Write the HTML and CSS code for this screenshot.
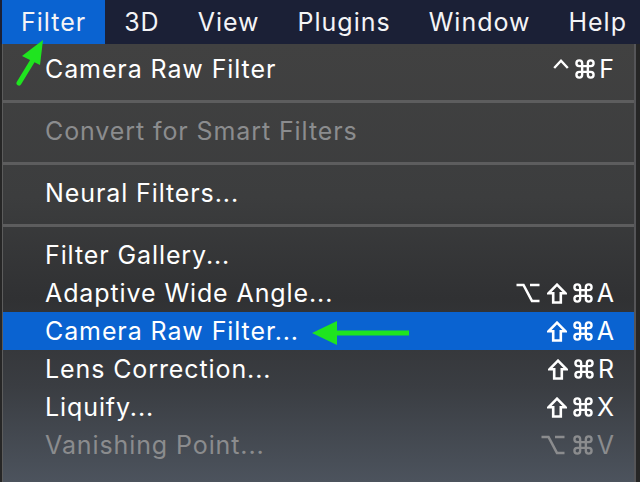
FILE: index.html
```html
<!DOCTYPE html>
<html>
<head>
<meta charset="utf-8">
<link rel="stylesheet" href="styles.css">
</head>
<body>
<svg class="defs" width="0" height="0">
  <defs>
    <symbol id="k-shift" viewBox="0 0 20 21">
      <path d="M10 1.7 L18.3 10.2 H13.8 V19.5 H6.2 V10.2 H1.7 Z" fill="none" stroke="currentColor" stroke-width="2.6" stroke-linejoin="miter"/>
    </symbol>
    <symbol id="k-cmd" viewBox="-1.5 -1.5 23 21">
      <path d="M7 6 H13 V12 H7 Z M7 6 V3 A3 3 0 1 0 4 6 Z M13 6 V3 A3 3 0 1 1 16 6 Z M7 12 V15 A3 3 0 1 1 4 12 Z M13 12 V15 A3 3 0 1 0 16 12 Z" fill="none" stroke="currentColor" stroke-width="2.5"/>
    </symbol>
    <symbol id="k-opt" viewBox="0 0 24 20">
      <path d="M0.5 2 H7.5 L16 18 H23.5 M14 2 H23.5" fill="none" stroke="currentColor" stroke-width="2.6"/>
    </symbol>
    <symbol id="k-ctrl" viewBox="0 0 16 10">
      <path d="M1.2 9 L8 1.8 L14.8 9" fill="none" stroke="currentColor" stroke-width="2.4"/>
    </symbol>
  </defs>
</svg>
<div class="screen">
  <div class="menubar">
    <span class="mb-item active">Filter</span>
    <span class="mb-item">3D</span>
    <span class="mb-item">View</span>
    <span class="mb-item">Plugins</span>
    <span class="mb-item">Window</span>
    <span class="mb-item">Help</span>
  </div>
  <div class="menu">
    <div class="row"><span class="label">Camera Raw Filter</span><span class="keys"><svg class="k ctrl"><use href="#k-ctrl"/></svg><svg class="k cmd"><use href="#k-cmd"/></svg><span class="kl">F</span></span></div>
    <div class="sep"></div>
    <div class="row disabled"><span class="label">Convert for Smart Filters</span></div>
    <div class="sep"></div>
    <div class="row"><span class="label">Neural Filters...</span></div>
    <div class="sep"></div>
    <div class="row"><span class="label">Filter Gallery...</span></div>
    <div class="row"><span class="label">Adaptive Wide Angle...</span><span class="keys"><svg class="k opt"><use href="#k-opt"/></svg><svg class="k shift"><use href="#k-shift"/></svg><svg class="k cmd"><use href="#k-cmd"/></svg><span class="kl">A</span></span></div>
    <div class="row selected"><span class="label">Camera Raw Filter...</span><span class="keys"><svg class="k shift"><use href="#k-shift"/></svg><svg class="k cmd"><use href="#k-cmd"/></svg><span class="kl">A</span></span></div>
    <div class="row"><span class="label">Lens Correction...</span><span class="keys"><svg class="k shift"><use href="#k-shift"/></svg><svg class="k cmd"><use href="#k-cmd"/></svg><span class="kl">R</span></span></div>
    <div class="row"><span class="label">Liquify...</span><span class="keys"><svg class="k shift"><use href="#k-shift"/></svg><svg class="k cmd"><use href="#k-cmd"/></svg><span class="kl">X</span></span></div>
    <div class="row disabled"><span class="label">Vanishing Point...</span><span class="keys"><svg class="k opt"><use href="#k-opt"/></svg><svg class="k cmd"><use href="#k-cmd"/></svg><span class="kl">V</span></span></div>
  </div>
  <svg class="arrow arrow-diag" width="60" height="100" viewBox="0 0 60 100">
    <line x1="19" y1="83" x2="33" y2="60" stroke="#1fe41f" stroke-width="5" stroke-linecap="round"/>
    <polygon points="43,40 22,56 40,65" fill="#1fe41f"/>
  </svg>
  <svg class="arrow arrow-left" width="110" height="40" viewBox="0 0 110 40">
    <line x1="20" y1="13" x2="97" y2="13" stroke="#1fe41f" stroke-width="5"/>
    <polygon points="0,13 25,1 25,25" fill="#1fe41f"/>
  </svg>
</div>
</body>
</html>
```

FILE: styles.css
```css
html, body {
  margin: 0;
  padding: 0;
  background: #262626;
}
.defs {
  position: absolute;
  width: 0;
  height: 0;
}
.screen {
  position: relative;
  width: 640px;
  height: 482px;
  overflow: hidden;
  background: #262626;
  font-family: Inter, "Liberation Sans", sans-serif;
  color: #ffffff;
}
.menubar {
  display: flex;
  height: 44px;
  background: #1b2036;
  padding-left: 2px;
  align-items: stretch;
}
.mb-item {
  display: flex;
  align-items: center;
  padding: 0 19px;
  font-size: 25px;
  letter-spacing: 1px;
  color: #f4f4f6;
}
.mb-item.active {
  background: #0a63d1;
}
.menu {
  margin-left: 2px;
  width: 634px;
  height: 438px;
  border-left: 1px solid #5c5c5c;
  border-right: 2px solid #555558;
  padding-top: 6px;
  box-sizing: border-box;
  background: linear-gradient(to bottom, #414141 0%, #3c3d3e 35%, #303133 58%, #3a3d42 78%, #4c535d 100%);
}
.row {
  display: flex;
  justify-content: space-between;
  align-items: center;
  height: 38px;
  padding: 0 20px 0 42px;
  font-size: 25px;
  letter-spacing: 0.9px;
  color: #ffffff;
}
.row.disabled {
  color: #8b8c8e;
}
.row.selected {
  background: #0a63d1;
}
.keys {
  display: flex;
  align-items: center;
  gap: 5px;
}
.k {
  display: block;
}
.k.shift {
  width: 20px;
  height: 21px;
}
.k.cmd {
  width: 22px;
  height: 20px;
}
.k.opt {
  width: 24px;
  height: 20px;
  margin-right: 2px;
}
.k.ctrl {
  width: 16px;
  height: 10px;
  margin-top: -10px;
}
.kl {
  letter-spacing: 0;
  margin-left: -2px;
}
.sep {
  height: 3px;
  margin: 12px 0 9px;
  background: #5d5d5e;
}
.arrow {
  position: absolute;
}
.arrow-diag {
  left: 0;
  top: 0;
}
.arrow-left {
  left: 312px;
  top: 320px;
}
```
